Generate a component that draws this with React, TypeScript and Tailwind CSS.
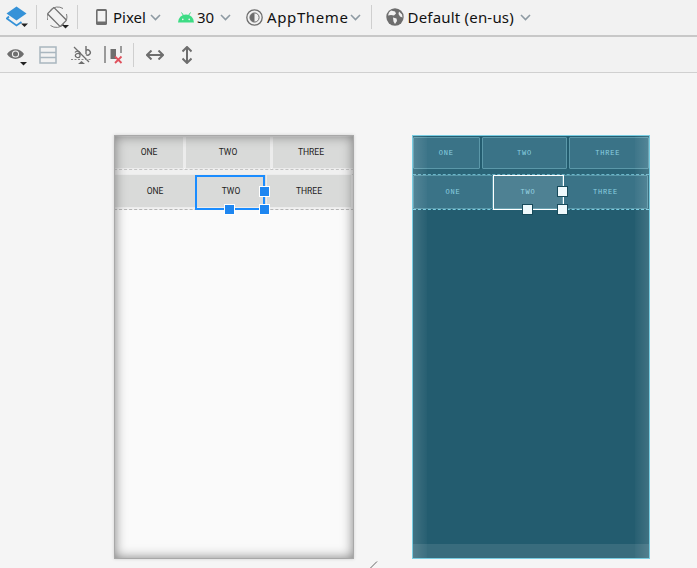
const Chevron = ({ className = "" }: { className?: string }) => (
	<svg width="11" height="7" viewBox="0 0 11 7" className={className}>
		<path d="M1 1l4.5 4.5L10 1" fill="none" stroke="#8e9aa3" strokeWidth="1.6" />
	</svg>
);

const Divider = ({ className = "" }: { className?: string }) => (
	<div className={`h-6 w-px bg-[#cfcfcf] ${className}`} />
);

const Caret = () => (
	<path d="M0 0h7l-3.5 3.5z" fill="#222" />
);

const LayersIcon = () => (
	<svg width="22" height="24" viewBox="0 0 22 24">
		<path d="M10.500 1.500l10 7-10 7-10-7z" fill="#3592d8" />
		<path d="M3 11.500L0.800 13.500l9.700 7 5-3.600" fill="none" stroke="#3592d8" strokeWidth="1.800" />
		<g transform="translate(15 18.500)"><Caret /></g>
	</svg>
);

const RotateIcon = () => (
	<svg width="24" height="24" viewBox="0 0 24 24">
		<rect x="5.500" y="3" width="9" height="18" rx="1" transform="rotate(-45 10 12)" fill="none" stroke="#6e6e6e" strokeWidth="1.300" />
		<path d="M3.500 5A10 10 0 0 1 16 3.500M17 19a10 10 0 0 1-13.500 1.500M19.500 9a10 10 0 0 1 0 6M0.500 9a10 10 0 0 0 0 6" fill="none" stroke="#7d7d7d" strokeWidth="1" />
		<g transform="translate(15 20)"><Caret /></g>
	</svg>
);

const PhoneIcon = () => (
	<svg width="11" height="16" viewBox="0 0 11 16">
		<rect x="0" y="0" width="11" height="16" rx="1.500" fill="#6e6e6e" />
		<rect x="1.600" y="2" width="7.800" height="10.500" fill="#f2f2f2" />
	</svg>
);

const AndroidIcon = () => (
	<svg width="16" height="11" viewBox="0 0 16 11">
		<path d="M0 10.500a8 8 0 0 1 16 0z" fill="#3ddc84" />
		<path d="M3.500 0.500l2 3M12.500 0.500l-2 3" stroke="#3ddc84" strokeWidth="1" />
		<circle cx="4.800" cy="7.400" r="0.800" fill="#f2f2f2" />
		<circle cx="11.200" cy="7.400" r="0.800" fill="#f2f2f2" />
	</svg>
);

const ThemeIcon = () => (
	<svg width="17" height="17" viewBox="0 0 17 17">
		<circle cx="8.500" cy="8.500" r="7.700" fill="none" stroke="#6e6e6e" strokeWidth="1.300" />
		<circle cx="8.500" cy="8.500" r="4.600" fill="none" stroke="#6e6e6e" strokeWidth="1" />
		<path d="M8.500 3.900a4.600 4.600 0 0 0 0 9.200z" fill="#6e6e6e" />
	</svg>
);

const GlobeIcon = () => (
	<svg width="18" height="18" viewBox="0 0 18 18">
		<circle cx="9" cy="9" r="8.700" fill="#6e6e6e" />
		<path d="M5 2.500l4 1 1 2-2 2-3-.5-3 .5 1-3zM7 9.500l3.500 1 .5 2.500-2 3-1.500-2.500zM13 3.500l3 3 .5 3-2.500-1-1.500-2.500z" fill="#f2f2f2" />
	</svg>
);

const EyeIcon = () => (
	<svg width="20" height="20" viewBox="0 0 20 20">
		<path d="M0 7c4-6.500 13-6.500 17 0-4 6.500-13 6.500-17 0z" fill="#6e6e6e" />
		<circle cx="8.500" cy="7" r="3.600" fill="#f2f2f2" />
		<circle cx="8.500" cy="7" r="2.500" fill="#6e6e6e" />
		<g transform="translate(13 15)"><Caret /></g>
	</svg>
);

const RowsIcon = () => (
	<svg width="18" height="18" viewBox="0 0 18 18">
		<rect x="1" y="1" width="16" height="16" fill="none" stroke="#a9b6bf" strokeWidth="1.500" />
		<path d="M1 6.500h16M1 11.500h16" stroke="#a9b6bf" strokeWidth="1.500" />
	</svg>
);

const NoTextIcon = () => (
	<svg width="21" height="20" viewBox="0 0 21 20">
		<path d="M15 1v8M15 5.500a2.600 2.600 0 1 1 0 4" fill="none" stroke="#6e6e6e" strokeWidth="1.400" />
		<path d="M4 7.500a3 3 0 0 1 5 0v4M9 9.500a2.500 2 0 1 0 0 2" fill="none" stroke="#6e6e6e" strokeWidth="1.300" />
		<path d="M3 2l15 15" stroke="#6e6e6e" strokeWidth="1.300" />
		<path d="M0 14.500h21" stroke="#8a8a8a" strokeWidth="1" strokeDasharray="2 1.500" />
		<path d="M7 19l3.500-3 3.500 3z" fill="#6e6e6e" />
	</svg>
);

const ErrorsIcon = () => (
	<svg width="19" height="20" viewBox="0 0 19 20">
		<path d="M1 1v17" stroke="#7d7d7d" strokeWidth="1.500" />
		<path d="M17 1v7" stroke="#7d7d7d" strokeWidth="1.500" />
		<rect x="6.500" y="4" width="5.500" height="10" fill="#6e6e6e" />
		<path d="M11 11.500l6.500 6.500M17.500 11.500L11 18" stroke="#e0505c" strokeWidth="1.800" />
	</svg>
);

const ArrowsH = () => (
	<svg width="18" height="10" viewBox="0 0 18 10">
		<path d="M2 5h14" stroke="#6e6e6e" strokeWidth="2" />
		<path d="M5.500 0.500L1 5l4.500 4.500M12.500 0.500L17 5l-4.500 4.500" fill="none" stroke="#6e6e6e" strokeWidth="2" />
	</svg>
);

const ArrowsV = () => (
	<svg width="10" height="18" viewBox="0 0 10 18">
		<path d="M5 2v14" stroke="#6e6e6e" strokeWidth="2" />
		<path d="M0.500 5.500L5 1l4.500 4.500M0.500 12.500L5 17l4.500-4.500" fill="none" stroke="#6e6e6e" strokeWidth="2" />
	</svg>
);

const TopToolbar = () => (
	<div className="flex h-[37px] items-center border-b-2 border-[#c8c8c8] bg-[#f2f2f2] pb-px text-[15px] text-[#111]">
		<div className="ml-[6px]"><LayersIcon /></div>
		<Divider className="ml-[8px]" />
		<div className="ml-[10px]"><RotateIcon /></div>
		<Divider className="ml-[6px]" />
		<div className="ml-[18px]"><PhoneIcon /></div>
		<span className="ml-[6px]">Pixel</span>
		<Chevron className="ml-[4px]" />
		<div className="ml-[17px]"><AndroidIcon /></div>
		<span className="ml-[3px]">30</span>
		<Chevron className="ml-[6px]" />
		<div className="ml-[15px]"><ThemeIcon /></div>
		<span className="ml-[4px] tracking-[0.6px]">AppTheme</span>
		<Chevron className="ml-[2px]" />
		<Divider className="ml-[10px]" />
		<div className="ml-[14px]"><GlobeIcon /></div>
		<span className="ml-[3px] tracking-[0.2px]">Default (en-us)</span>
		<Chevron className="ml-[6px]" />
	</div>
);

const SecondToolbar = () => (
	<div className="flex h-[36px] items-center border-b border-[#d0d0d0] bg-[#f2f2f2]">
		<div className="ml-[7px] mt-[4px]"><EyeIcon /></div>
		<div className="ml-[12px]"><RowsIcon /></div>
		<div className="ml-[14px]"><NoTextIcon /></div>
		<div className="ml-[12px]"><ErrorsIcon /></div>
		<Divider className="ml-[10px]" />
		<div className="ml-[12px]"><ArrowsH /></div>
		<div className="ml-[18px]"><ArrowsV /></div>
	</div>
);

const DesignCell = ({ label, className }: { label: string; className: string }) => (
	<div className={`flex items-center justify-center bg-[#d9dad9] font-['Roboto',sans-serif] text-[8.5px] text-[#222] shadow-[0_0_0_1px_#ececec] ${className}`}>
		{label}
	</div>
);

const BlueCell = ({ label, className }: { label: string; className: string }) => (
	<div className={`flex items-center justify-center rounded-[1px] border border-[#5b98a9] bg-[#3a7387] font-['Liberation_Mono',monospace] text-[7px] tracking-[0.8px] text-[#8bd0e0] ${className}`}>
		{label}
	</div>
);

const DesignFrame = () => (
	<div className="relative flex h-[424px] w-[240px] flex-col bg-[#fafafa] shadow-[0_0_3px_#cfcfcf]">
		<div className="flex h-[33px] gap-[3px] bg-[#ececec] px-px pt-[2px]">
			<DesignCell label="ONE" className="w-[68px]" />
			<DesignCell label="TWO" className="w-[84px]" />
			<DesignCell label="THREE" className="w-[80px] pr-[4px]" />
		</div>
		<div className="mt-[1px] h-[6px] border-y border-dashed border-[#c4c4c4] bg-[#f0f0f0]" />
		<div className="relative flex h-[35px] border-b border-dashed border-[#b5b5b5] bg-[#f1f1f1] px-px pb-[2px]">
			<DesignCell label="ONE" className="w-[80px]" />
			<DesignCell label="TWO" className="ml-px w-[70px]" />
			<DesignCell label="THREE" className="ml-px w-[84px]" />
			<div className="absolute left-[81px] top-0 h-[35px] w-[70px] border-2 border-[#1a8cff]" />
			<div className="absolute left-[145px] top-[11px] h-[11px] w-[11px] border border-white bg-[#1e86f0]" />
			<div className="absolute left-[110px] top-[29px] h-[11px] w-[11px] border border-white bg-[#1e86f0]" />
			<div className="absolute left-[145px] top-[29px] h-[11px] w-[11px] border border-white bg-[#1e86f0]" />
		</div>
		<div className="pointer-events-none absolute inset-0 border border-[#a8a8a8] shadow-[inset_0_0_12px_#7d7d7d]" />
	</div>
);

const BlueprintFrame = () => (
	<div className="relative ml-[58px] flex h-[424px] w-[238px] flex-col border border-[#79cde2] bg-[#235c6f]">
		<div className="flex h-[33px] gap-[2px] pt-px">
			<BlueCell label="ONE" className="w-[67px]" />
			<BlueCell label="TWO" className="w-[86px]" />
			<BlueCell label="THREE" className="w-[80px] pr-[3px]" />
		</div>
		<div className="h-[6px] border-b border-dashed border-[#69b5c9] bg-[#2a6477]" />
		<div className="relative flex h-[35px] border-b border-dashed border-[#79cde2]">
			<BlueCell label="ONE" className="w-[80px]" />
			<BlueCell label="TWO" className="w-[70px]" />
			<BlueCell label="THREE" className="w-[85px]" />
			<div className="absolute left-[80px] top-0 h-[35px] w-[71px] border border-white bg-[#ffffff1a]" />
			<div className="absolute left-[144px] top-[11px] h-[11px] w-[11px] border border-[#174a5a] bg-[#eef9fc]" />
			<div className="absolute left-[109px] top-[29px] h-[11px] w-[11px] border border-[#174a5a] bg-[#eef9fc]" />
			<div className="absolute left-[144px] top-[29px] h-[11px] w-[11px] border border-[#174a5a] bg-[#eef9fc]" />
		</div>
		<div className="pointer-events-none absolute inset-0 flex items-stretch">
			<div className="w-[14px] bg-linear-to-r from-[#ffffff22] to-[#ffffff05]" />
			<div className="flex-1" />
			<div className="w-[14px] bg-linear-to-l from-[#ffffff22] to-[#ffffff05]" />
		</div>
		<div className="pointer-events-none absolute inset-x-0 bottom-0 h-[14px] bg-[#ffffff1a]" />
	</div>
);

export default function App() {
	return (
		<div className="relative h-[568px] w-[697px] overflow-hidden bg-[#f5f5f5] font-['Noto_Sans',sans-serif]">
			<TopToolbar />
			<SecondToolbar />
			<div className="flex pl-[114px] pt-[62px]">
				<DesignFrame />
				<BlueprintFrame />
			</div>
			<svg width="9" height="7" viewBox="0 0 9 7" className="absolute left-[370px] top-[561px]">
				<path d="M0.500 7L7 0.500" stroke="#666" strokeWidth="1" />
			</svg>
		</div>
	);
}
